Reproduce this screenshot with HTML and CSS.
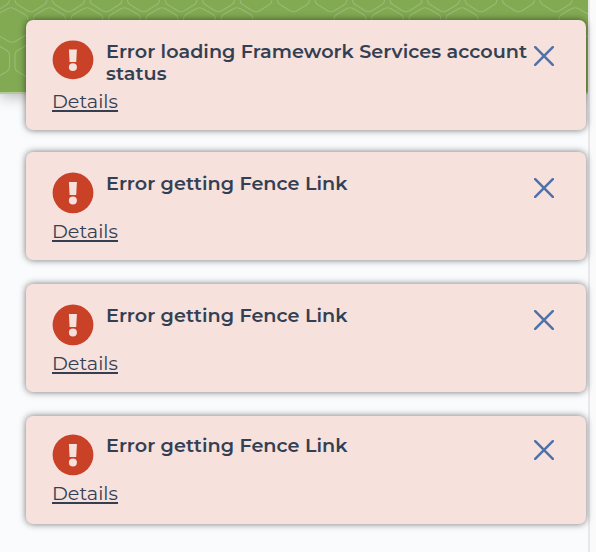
FILE: index.html
```html
<!DOCTYPE html>
<html lang="en">
<head>
<meta charset="utf-8">
<title>Notifications</title>
<link rel="stylesheet" href="styles.css">
</head>
<body>
<svg width="0" height="0" class="defs">
  <symbol id="alert" viewBox="0 0 42 42" preserveAspectRatio="none"><circle cx="21" cy="20.8" r="20.4" fill="#c94127"/><path d="M16.9 10H24.9L24.2 23H17.6Z" fill="#f6e1dc"/><circle cx="20.9" cy="28.5" r="4" fill="#f6e1dc"/></symbol>
  <symbol id="close" viewBox="0 0 20 20"><path d="M1.2 1.2L18.8 18.8M18.8 1.2L1.2 18.8" stroke="#4f71aa" stroke-width="2.5" stroke-linecap="round"/></symbol>
</svg>
<div class="page">
  <header class="banner">
    <svg width="588" height="92" fill="none" stroke="#98ba73" stroke-width="1.1">
      <defs>
        <path id="down" d="M-16 -3V0Q-16 3 -13.5 4.5L-3 11Q0 12.5 3 11L13.5 4.5Q16 3 16 0V-3"/>
        <path id="hex" d="M-3 8.5Q0 7 3 8.5L13.5 14.5Q16 16 16 19V31Q16 34 13.5 35.5L3 41.5Q0 43 -3 41.5L-13.5 35.5Q-16 34 -16 31V19Q-16 16 -13.5 14.5Z"/>
      </defs>
      <use href="#down" x="-6.5"/><use href="#down" x="31"/><use href="#down" x="68.5"/><use href="#down" x="106"/><use href="#down" x="143.5"/><use href="#down" x="181"/><use href="#down" x="218.5"/><use href="#down" x="256"/><use href="#down" x="293.5"/><use href="#down" x="331"/><use href="#down" x="368.5"/><use href="#down" x="406"/><use href="#down" x="443.5"/><use href="#down" x="481"/><use href="#down" x="518.5"/><use href="#down" x="556"/>
      <path d="M-4 15L8 8.5Q11 7 14 8.5L24 14Q28 16 28 20M-4 34L9 41.5Q12 43 15 41.5L26 35"/>
      <use href="#hex" x="49.5"/><use href="#hex" x="87"/><use href="#hex" x="124.5"/><use href="#hex" x="162"/><use href="#hex" x="199.5"/><use href="#hex" x="237"/><use href="#hex" x="350"/><use href="#hex" x="387.5"/><use href="#hex" x="425"/><use href="#hex" x="462"/><use href="#hex" x="575"/>
      <use href="#hex" x="-6.5" y="36"/><use href="#hex" x="31" y="36"/>
    </svg>
  </header>
</div>
<main class="toasts">
  <section class="toast first">
    <div class="row"><svg class="alert"><use href="#alert"/></svg><h2>Error loading Framework Services account<br>status</h2><button aria-label="Close"><svg class="close"><use href="#close"/></svg></button></div>
    <a href="#">Details</a>
  </section>
  <section class="toast">
    <div class="row"><svg class="alert"><use href="#alert"/></svg><h2>Error getting Fence Link</h2><button aria-label="Close"><svg class="close"><use href="#close"/></svg></button></div>
    <a href="#">Details</a>
  </section>
  <section class="toast">
    <div class="row"><svg class="alert"><use href="#alert"/></svg><h2>Error getting Fence Link</h2><button aria-label="Close"><svg class="close"><use href="#close"/></svg></button></div>
    <a href="#">Details</a>
  </section>
  <section class="toast last">
    <div class="row"><svg class="alert"><use href="#alert"/></svg><h2>Error getting Fence Link</h2><button aria-label="Close"><svg class="close"><use href="#close"/></svg></button></div>
    <a href="#">Details</a>
  </section>
</main>
</body>
</html>
```
FILE: styles.css
```css
* { box-sizing: border-box; }
body {
  margin: 0;
  height: 552px;
  overflow: hidden;
  background: #fafafa;
  font-family: Montserrat, Inter, sans-serif;
  color: #353f52;
}
.defs { position: absolute; }
.page {
  width: 590px;
  height: 552px;
  background: #fafbfd;
  border-right: 2px solid #e8e8e8;
  overflow: hidden;
}
.banner {
  height: 94px;
  background: #82aa53;
  border-bottom: 2px solid #b5c99b;
  box-shadow: 0 2px 14px rgba(0, 0, 0, .3);
}
.banner svg { display: block; }
.toasts {
  position: absolute;
  left: 26px;
  top: 20px;
  width: 560px;
}
.toast {
  height: 108px;
  margin-bottom: 24px;
  padding: 20px 32px 0 26px;
  border-radius: 7px;
  background: #f6e1dc;
  box-shadow: 0 0 7px rgba(0, 0, 0, .55);
}
.toast.first { height: 110px; margin-bottom: 22px; }
.row { display: flex; height: 46px; }
.first .row { height: 48px; }
.last .row { height: 44px; }
.alert { flex: none; width: 42px; height: 42px; }
.first .alert { height: 40px; }
.last .alert { margin-top: -2px; }
h2 {
  flex: 1;
  min-width: 0;
  margin: 0 0 0 12px;
  font-size: 19.2px;
  line-height: 22px;
  font-weight: 600;
  letter-spacing: .03px;
  white-space: nowrap;
}
.last h2 { margin-top: -2px; }
button { flex: none; width: 20px; height: 20px; margin-top: 6px; padding: 0; border: 0; background: none; }
.last button { margin-top: 4px; }
.close { display: block; width: 20px; height: 20px; }
a {
  display: block;
  width: 66px;
  height: 24px;
  border-bottom: 2px solid #353f52;
  color: #353f52;
  font-size: 19.2px;
  font-weight: 400;
  line-height: 26px;
  text-decoration: none;
  white-space: nowrap;
}
```
